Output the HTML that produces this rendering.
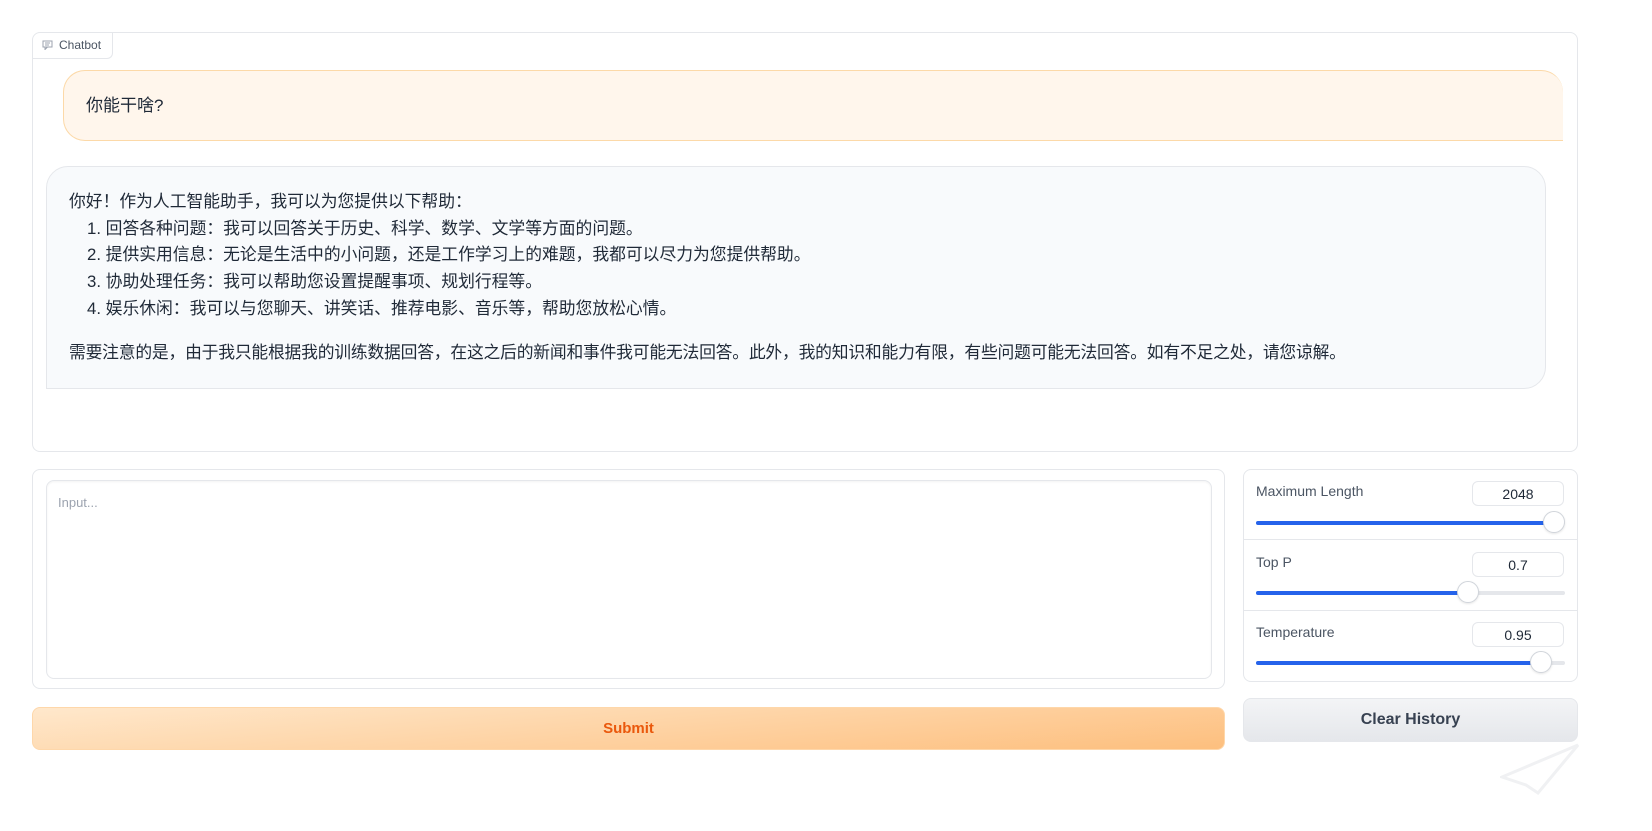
<!DOCTYPE html>
<html><head><meta charset="utf-8"><style>
*{box-sizing:border-box;margin:0;padding:0}
body{width:1652px;height:831px;background:#fff;font-family:"Liberation Sans","Noto Sans CJK SC",sans-serif;position:relative;overflow:hidden;color:#1f2937}
.abs{position:absolute}
.box{border:1px solid #e5e7eb;border-radius:8px;background:#fff}
.lbl{font-size:14px;color:#4b5563}
.num{position:absolute;left:228px;width:92px;height:25px;border:1px solid #e5e7eb;border-radius:6px;text-align:center;font-size:14px;line-height:24px;color:#1f2937}
.track{position:absolute;left:12px;width:309px;height:4px;border-radius:2px;background:#e5e7eb}
.fill{position:absolute;left:0;top:0;height:4px;background:#2563eb;border-radius:2px}
.thumb{position:absolute;top:-10px;width:22px;height:22px;border-radius:50%;background:#fff;border:1px solid #d1d5db;box-shadow:0 1px 2px rgba(0,0,0,.1)}
.bot div{line-height:26.7px}
</style></head><body>
<div class="abs box" style="left:32px;top:32px;width:1546px;height:420px"></div>
<div class="abs" style="left:32px;top:32px;width:81px;height:27px;border:1px solid #e5e7eb;border-radius:0 0 6px 0;border-top:none;border-left:none;font-size:12px;color:#4b5563;line-height:26px;padding-left:10px">
<svg width="11" height="10" style="vertical-align:-1px;margin-right:6px"><rect x="1" y="1" width="9" height="6" fill="none" stroke="#9ca3af" stroke-width="1"/><path d="M3 7 L3 9.5 L5.5 7" fill="none" stroke="#9ca3af"/><path d="M3 3h5M3 5h4" stroke="#9ca3af"/></svg>Chatbot</div>
<div class="abs" style="left:63px;top:70px;width:1500px;height:71px;background:#fff6ec;border:1px solid #fcd9a8;border-radius:22px 22px 0 22px;border-right:none;font-size:17px;line-height:70px;padding-left:22px">你能干啥?</div>
<div class="abs bot" style="left:46px;top:166px;width:1500px;height:223px;background:#f8fafc;border:1px solid #e5e7eb;border-radius:22px 22px 22px 0;font-size:16.8px;padding:22px 0 0 22px">
<div>你好！作为人工智能助手，我可以为您提供以下帮助：</div>
<div style="padding-left:18px">1. 回答各种问题：我可以回答关于历史、科学、数学、文学等方面的问题。</div>
<div style="padding-left:18px">2. 提供实用信息：无论是生活中的小问题，还是工作学习上的难题，我都可以尽力为您提供帮助。</div>
<div style="padding-left:18px">3. 协助处理任务：我可以帮助您设置提醒事项、规划行程等。</div>
<div style="padding-left:18px">4. 娱乐休闲：我可以与您聊天、讲笑话、推荐电影、音乐等，帮助您放松心情。</div>
<div style="margin-top:17px;letter-spacing:-0.2px">需要注意的是，由于我只能根据我的训练数据回答，在这之后的新闻和事件我可能无法回答。此外，我的知识和能力有限，有些问题可能无法回答。如有不足之处，请您谅解。</div>
</div>

<div class="abs box" style="left:32px;top:469px;width:1193px;height:220px"></div>
<div class="abs" style="left:46px;top:480px;width:1166px;height:199px;border:1px solid #e5e7eb;border-radius:8px;box-shadow:inset 0 1px 2px rgba(0,0,0,.05);font-size:13px;color:#9ca3af;padding:14px 0 0 11px">Input...</div>
<div class="abs" style="left:32px;top:707px;width:1193px;height:43px;border:1px solid #fed7aa;border-radius:8px;background:linear-gradient(175deg,#ffe8cc,#fdbf7e);color:#ea580c;font-weight:bold;font-size:15px;text-align:center;line-height:42px">Submit</div>

<div class="abs box" style="left:1243px;top:469px;width:335px;height:213px">
 <div class="abs lbl" style="left:12px;top:13px">Maximum Length</div>
 <div class="num" style="top:11px">2048</div>
 <div class="track" style="top:51px"><div class="fill" style="width:298px"></div><div class="thumb" style="left:287px"></div></div>
 <div class="abs" style="left:0;top:69px;width:333px;border-top:1px solid #e5e7eb"></div>
 <div class="abs lbl" style="left:12px;top:84px">Top P</div>
 <div class="num" style="top:82px">0.7</div>
 <div class="track" style="top:121px"><div class="fill" style="width:212px"></div><div class="thumb" style="left:201px"></div></div>
 <div class="abs" style="left:0;top:140px;width:333px;border-top:1px solid #e5e7eb"></div>
 <div class="abs lbl" style="left:12px;top:154px">Temperature</div>
 <div class="num" style="top:152px">0.95</div>
 <div class="track" style="top:191px"><div class="fill" style="width:285px"></div><div class="thumb" style="left:274px"></div></div>
</div>
<div class="abs" style="left:1243px;top:698px;width:335px;height:44px;border:1px solid #e5e7eb;border-radius:8px;background:linear-gradient(180deg,#f3f4f6,#e5e7eb);font-weight:bold;font-size:16px;color:#374151;text-align:center;line-height:42px">Clear History</div>
<svg class="abs" style="left:1500px;top:735px" width="152" height="60"><path d="M78 10 L2 42 L26 50 L38 58 Z" fill="none" stroke="#f0f1f3" stroke-width="3"/></svg>
</body></html>
